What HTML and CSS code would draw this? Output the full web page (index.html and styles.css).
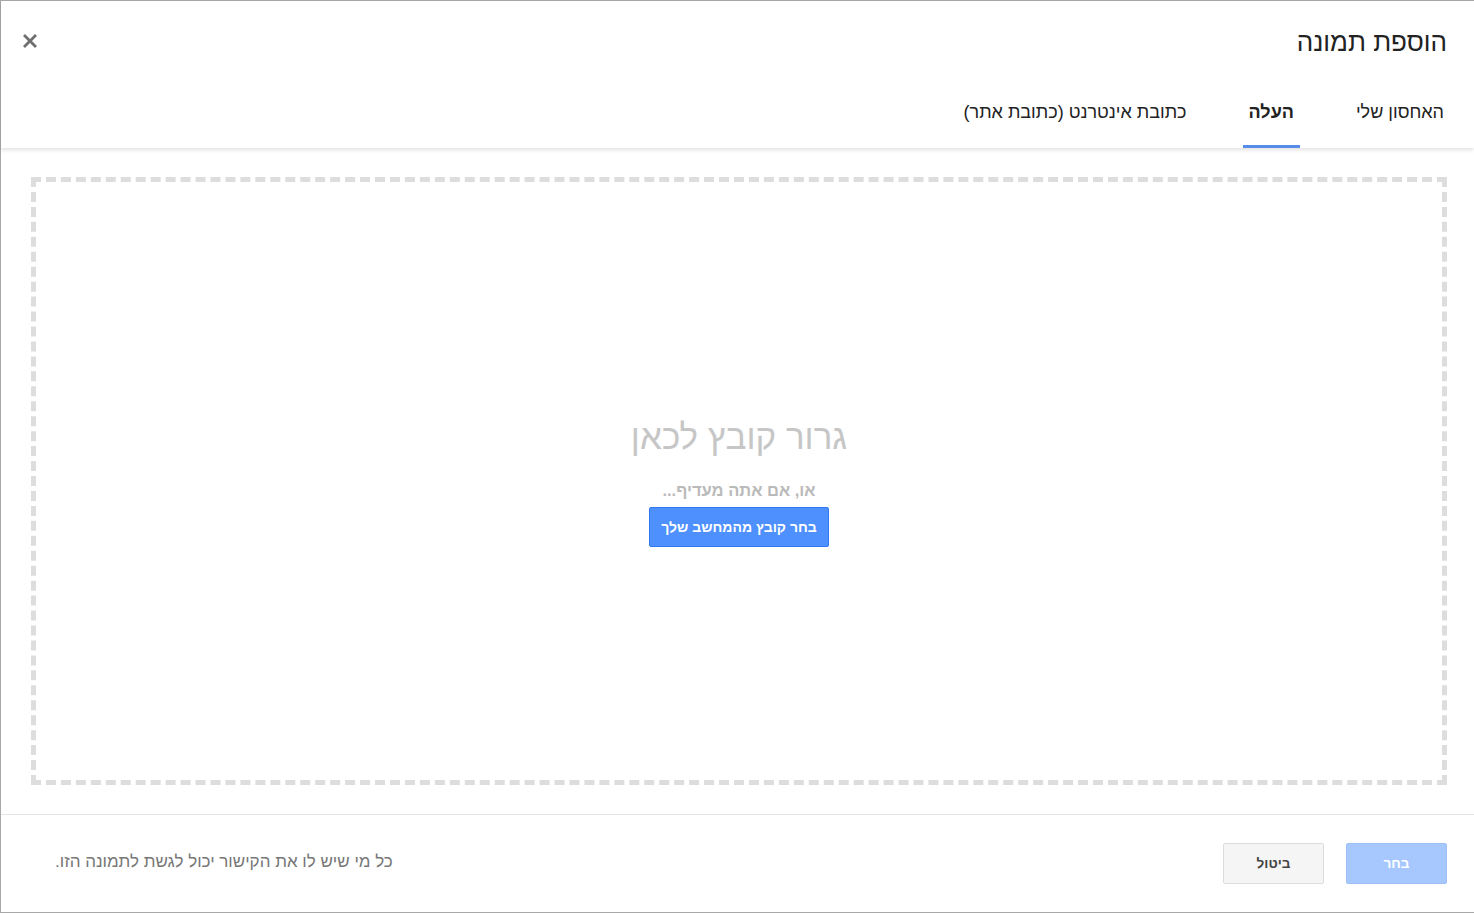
FILE: index.html
```html
<!DOCTYPE html>
<html lang="he" dir="rtl">
<head>
<meta charset="utf-8">
<title>הוספת תמונה</title>
<link rel="stylesheet" href="styles.css">
</head>
<body>
<div class="dialog">
  <header class="header">
    <div class="title-row">
      <h1 class="title">הוספת תמונה</h1>
      <button class="close" aria-label="סגור">
        <svg width="14" height="14" viewBox="0 0 14 14"><path d="M2 2 L12 12 M12 2 L2 12" stroke="#6f6f6f" stroke-width="2.8" stroke-linecap="square"/></svg>
      </button>
    </div>
    <nav class="tabs">
      <div class="tab">האחסון שלי</div>
      <div class="tab active">העלה</div>
      <div class="tab">כתובת אינטרנט (כתובת אתר)</div>
    </nav>
  </header>
  <main class="main">
    <div class="dropzone">
      <div class="drop-title">גרור קובץ לכאן</div>
      <div class="drop-sub">או, אם אתה מעדיף...</div>
      <button class="btn-blue">בחר קובץ מהמחשב שלך</button>
    </div>
  </main>
  <footer class="footer">
    <div class="buttons">
      <button class="btn btn-select">בחר</button>
      <button class="btn btn-cancel">ביטול</button>
    </div>
    <div class="note">כל מי שיש לו את הקישור יכול לגשת לתמונה הזו.</div>
  </footer>
</div>
</body>
</html>
```
FILE: styles.css
```css
html, body {
  margin: 0;
  padding: 0;
  background: #fff;
}
body {
  font-family: "Liberation Sans", Arial, "DejaVu Sans", sans-serif;
  color: #222;
  overflow: hidden;
}
.dialog {
  direction: rtl;
  box-sizing: border-box;
  width: 1474px;
  height: 913px;
  border: 1px solid #a8a8a8;
  border-right: none;
  display: flex;
  flex-direction: column;
}
.header {
  height: 147px;
  flex: none;
  display: flex;
  flex-direction: column;
  position: relative;
  z-index: 1;
  box-shadow: 0 2px 4px rgba(0, 0, 0, 0.12);
  background: #fff;
}
.title-row {
  height: 88px;
  flex: none;
  display: flex;
  align-items: flex-start;
  justify-content: space-between;
  padding: 0 27px 0 22px;
}
.title {
  margin: 26px 0 0;
  font-size: 26px;
  font-weight: normal;
  color: #222;
  line-height: 30px;
}
.close {
  margin-top: 33px;
  padding: 0;
  border: none;
  background: none;
  width: 14px;
  height: 14px;
  display: flex;
  cursor: pointer;
}
.tabs {
  height: 59px;
  flex: none;
  display: flex;
  gap: 50px;
  padding-right: 24px;
}
.tab {
  padding: 0 6px;
  font-size: 18px;
  color: #222;
  line-height: 46px;
  height: 59px;
  box-sizing: border-box;
  border-bottom: 3px solid transparent;
}
.tab.active {
  font-weight: bold;
  border-bottom-color: #588ce9;
}
.main {
  flex: 1;
  display: flex;
  padding: 29px 27px 29px 30px;
}
.dropzone {
  flex: 1;
  border: 5px dashed #dddddd;
  display: flex;
  flex-direction: column;
  align-items: center;
  justify-content: center;
  padding-top: 1px;
}
.drop-title {
  font-size: 35px;
  color: #c6c6c6;
  line-height: 40px;
}
.drop-sub {
  margin-top: 23px;
  font-size: 16.5px;
  font-weight: bold;
  color: #bababa;
  line-height: 20px;
}
.btn-blue {
  margin-top: 7px;
  height: 40px;
  padding: 0 11px;
  border: 1px solid #3079ed;
  border-radius: 2px;
  background: #4d90fe;
  color: #fff;
  font-family: inherit;
  font-size: 14px;
  font-weight: bold;
}
.footer {
  height: 97px;
  flex: none;
  border-top: 1px solid #e5e5e5;
  display: flex;
  align-items: flex-start;
  justify-content: space-between;
  padding: 0 27px 0 54px;
}
.buttons {
  display: flex;
  gap: 22px;
  margin-top: 28px;
}
.btn {
  width: 101px;
  height: 41px;
  border-radius: 2px;
  font-family: inherit;
  font-size: 13.5px;
  font-weight: bold;
}
.btn-select {
  background: #a6c8ff;
  border: 1px solid #9dc0f8;
  color: #fff;
}
.btn-cancel {
  background: #f5f5f5;
  border: 1px solid #dcdcdc;
  color: #444;
}
.note {
  margin-top: 37px;
  font-size: 17px;
  color: #777;
  line-height: 20px;
}
```
